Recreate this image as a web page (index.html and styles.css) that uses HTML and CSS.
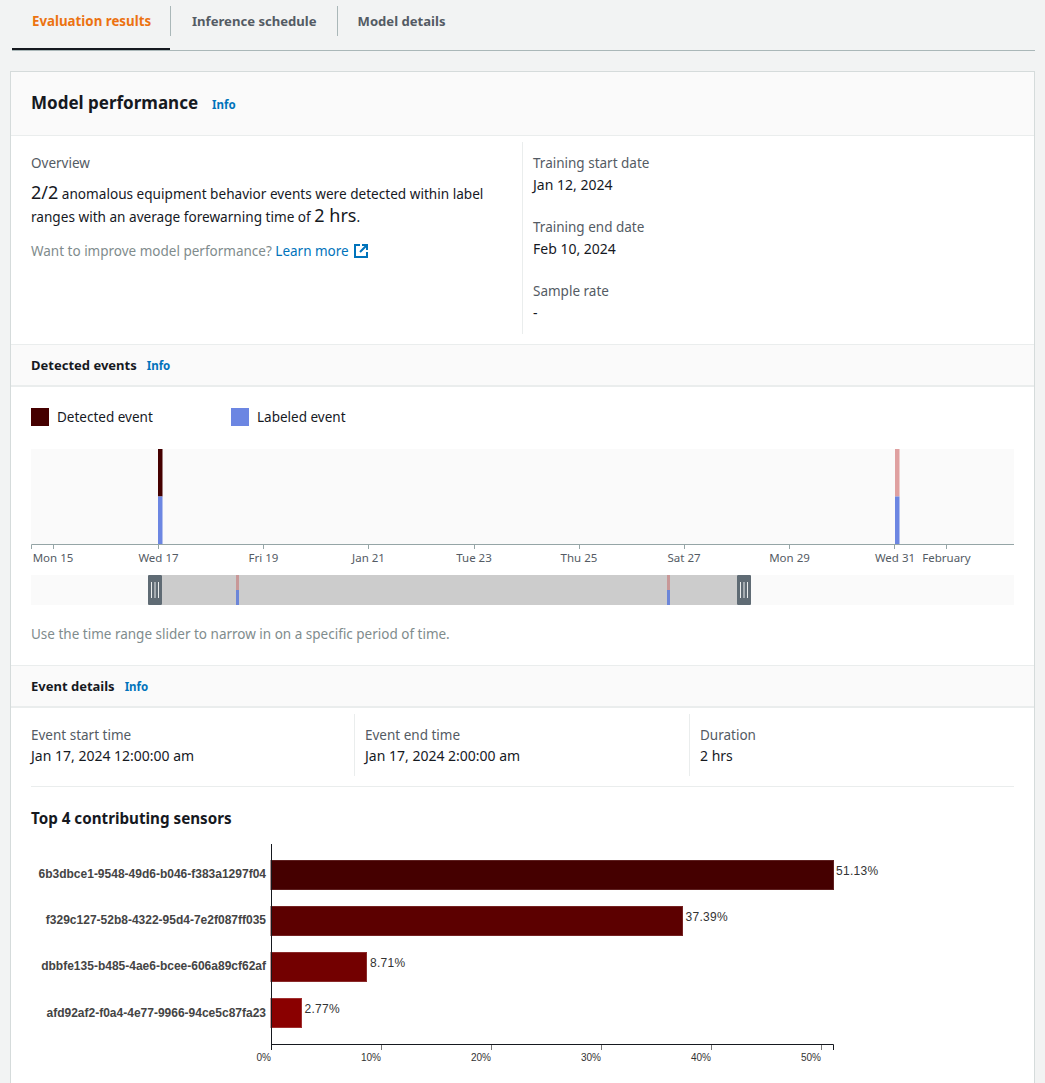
FILE: index.html
```html
<!DOCTYPE html>
<html lang="en">

<head>
  <meta charset="UTF-8" />
  <meta name="viewport" content="width=device-width, initial-scale=1.0" />
  <title>Evaluation results</title>
  <link rel="stylesheet" href="styles.css">
</head>

<body>
  <div class="tabs">
    <a class="tab active">Evaluation results</a>
    <a class="tab">Inference schedule</a>
    <a class="tab">Model details</a>
  </div>

  <div class="card">
    <div class="card-head">
      <h1>Model performance</h1>
      <a class="info">Info</a>
    </div>

    <div class="overview">
      <div class="overview-main">
        <div class="label">Overview</div>
        <p class="summary"><span class="big">2/2</span> anomalous equipment behavior events were detected within label<br>
          ranges with an average forewarning time of <span class="big">2 hrs</span>.</p>
        <p class="muted">Want to improve model performance? <a class="link">Learn more
          <svg class="ext-icon" viewBox="0 0 16 16" width="16" height="16">
            <path d="M7 2H2v12h12V9" />
            <path d="M9 2h5v5M14 2L7 9" />
          </svg></a></p>
      </div>
      <div class="overview-side">
        <div class="field">
          <div class="label">Training start date</div>
          <div>Jan 12, 2024</div>
        </div>
        <div class="field">
          <div class="label">Training end date</div>
          <div>Feb 10, 2024</div>
        </div>
        <div class="field">
          <div class="label">Sample rate</div>
          <div>-</div>
        </div>
      </div>
    </div>

    <div class="section-head">
      <h2>Detected events</h2>
      <a class="info">Info</a>
    </div>

    <div class="events">
      <div class="legend">
        <div class="legend-item"><span class="swatch detected"></span>Detected event</div>
        <div class="legend-item"><span class="swatch labeled"></span>Labeled event</div>
      </div>

      <svg class="timeline" viewBox="31 449 983 156" width="983" height="156">
        <rect x="31" y="449" width="983" height="95" fill="#fafafa" />
        <rect x="158" y="449" width="4.5" height="47.5" fill="#450000" />
        <rect x="158" y="496.5" width="4.5" height="47.5" fill="#6c86e2" />
        <rect x="895" y="449" width="4.5" height="47.5" fill="#dfa0a0" />
        <rect x="895" y="496.5" width="4.5" height="47.5" fill="#6c86e2" />

        <g class="axis-line">
          <path d="M31.5 549V544.5H1014" />
          <path d="M53.5 544v5M158.5 544v5M263.5 544v5M368.5 544v5M474.5 544v5M579.5 544v5M684.5 544v5M789.5 544v5M894.5 544v5M946.5 544v5" />
        </g>
        <g class="axis-text">
          <text x="53" y="562">Mon 15</text>
          <text x="158.5" y="562">Wed 17</text>
          <text x="263.5" y="562">Fri 19</text>
          <text x="368.5" y="562">Jan 21</text>
          <text x="474" y="562">Tue 23</text>
          <text x="579" y="562">Thu 25</text>
          <text x="684" y="562">Sat 27</text>
          <text x="789.5" y="562">Mon 29</text>
          <text x="895" y="562">Wed 31</text>
          <text x="946.5" y="562">February</text>
        </g>

        <rect x="31" y="575" width="983" height="30" fill="#fafafa" />
        <rect x="162" y="575" width="575" height="30" fill="#cccccc" />
        <rect x="236" y="575" width="3" height="15" fill="#c89898" />
        <rect x="236" y="590" width="3" height="15" fill="#6c86d8" />
        <rect x="667" y="575" width="3" height="15" fill="#c89898" />
        <rect x="667" y="590" width="3" height="15" fill="#6c86d8" />

        <rect x="148" y="575" width="14" height="30" rx="1" fill="#5f6b74" />
        <path class="grip" d="M151.5 582v16M155 582v16M158.500 582v16" />
        <rect x="737" y="575" width="14" height="30" rx="1" fill="#5f6b74" />
        <path class="grip" d="M740.500 582v16M744 582v16M747.500 582v16" />
      </svg>

      <p class="muted slider-note">Use the time range slider to narrow in on a specific period of time.</p>
    </div>

    <div class="section-head">
      <h2>Event details</h2>
      <a class="info">Info</a>
    </div>

    <div class="details">
      <div class="columns">
        <div class="col">
          <div class="label">Event start time</div>
          <div>Jan 17, 2024 12:00:00 am</div>
        </div>
        <div class="col">
          <div class="label">Event end time</div>
          <div>Jan 17, 2024 2:00:00 am</div>
        </div>
        <div class="col">
          <div class="label">Duration</div>
          <div>2 hrs</div>
        </div>
      </div>

      <h3>Top 4 contributing sensors</h3>

      <svg class="sensors" viewBox="31 838 983 245" width="983" height="245">
        <rect x="271" y="860.5" width="562.500" height="29" fill="#450000" stroke="#5e2020" />
        <rect x="271" y="906.500" width="411.500" height="29" fill="#5c0000" stroke="#742222" />
        <rect x="271" y="952.500" width="95.500" height="29" fill="#730000" stroke="#8a2a2a" />
        <rect x="271" y="998.500" width="30.500" height="29" fill="#8a0000" stroke="#a03030" />

        <g class="sensor-name">
          <text x="266" y="878">6b3dbce1-9548-49d6-b046-f383a1297f04</text>
          <text x="266" y="924">f329c127-52b8-4322-95d4-7e2f087ff035</text>
          <text x="266" y="970">dbbfe135-b485-4ae6-bcee-606a89cf62af</text>
          <text x="266" y="1017">afd92af2-f0a4-4e77-9966-94ce5c87fa23</text>
        </g>
        <g class="bar-value">
          <text x="836" y="875">51.13%</text>
          <text x="685.500" y="921">37.39%</text>
          <text x="370" y="967">8.71%</text>
          <text x="304.500" y="1013">2.77%</text>
        </g>

        <path class="bar-axis" d="M271.500 844V1050M271.500 1044.500H833.500V1050" />
        <path class="bar-tick" d="M381.500 1045v5M491.500 1045v5M601.500 1045v5M711.500 1045v5M821.500 1045v5" />
        <g class="bar-axis-text">
          <text x="271" y="1061">0%</text>
          <text x="381" y="1061">10%</text>
          <text x="491" y="1061">20%</text>
          <text x="601" y="1061">30%</text>
          <text x="711" y="1061">40%</text>
          <text x="821" y="1061">50%</text>
        </g>
      </svg>
    </div>
  </div>
</body>

</html>
```

FILE: styles.css
```css
html {
  overflow: hidden;
}

body {
  margin: 0;
  height: 1083px;
  overflow: hidden;
  background: #f2f3f3;
  color: #16191f;
  font-family: "Noto Sans", Arial, sans-serif;
  font-size: 14px;
  line-height: 22px;
}

/* tabs */
.tabs {
  display: flex;
  height: 50px;
  margin: 0 10px 0 12px;
  border-bottom: 1px solid #aab7b8;
  box-sizing: content-box;
}

.tab {
  height: 30px;
  margin-top: 6px;
  padding: 0 20px;
  border-left: 1px solid #aab7b8;
  color: #545b64;
  font-size: 13.100px;
  font-weight: 700;
  line-height: 30px;
}

.tab:nth-child(2) {
  padding-left: 21px;
}

.tab.active {
  width: 158px;
  height: 44px;
  margin-top: 6px;
  margin-bottom: -1px;
  padding: 0 0 0 20px;
  border-left: 0;
  border-bottom: 2px solid #16191f;
  box-sizing: border-box;
  color: #ec7211;
  font-size: 13.300px;
  line-height: 30px;
}

/* card */
.card {
  margin: 20px 10px 0 10px;
  border: 1px solid #d5dbdb;
  border-bottom: 0;
  background: #fff;
}

.card-head {
  display: flex;
  align-items: center;
  height: 63px;
  padding-left: 20px;
  border-bottom: 1px solid #eaeded;
  background: #fafafa;
}

h1 {
  margin: -1px 14px 0 0;
  font-size: 17px;
  font-weight: 700;
}

.info {
  color: #0073bb;
  font-size: 11.500px;
  font-weight: 700;
}

.card-head .info {
  margin-top: 3px;
}

.section-head {
  display: flex;
  align-items: center;
  height: 40px;
  padding-left: 20px;
  border-top: 1px solid #eaeded;
  border-bottom: 2px solid #eaeded;
  background: #fafafa;
  box-sizing: content-box;
}

h2 {
  margin: 0 10px 0 0;
  font-size: 13px;
  font-weight: 700;
}

.section-head .info {
  margin-top: 2px;
}

h3 {
  margin: 19px 0 8px 0;
  font-size: 15.200px;
  font-weight: 700;
  line-height: 24px;
}

.label {
  color: #545b64;
  font-size: 13.500px;
}

.muted {
  margin: 0;
  color: #7f8c8d;
  font-size: 13.500px;
}

.link {
  color: #0073bb;
}

.ext-icon {
  margin-left: 1px;
  fill: none;
  stroke: #0073bb;
  stroke-width: 2;
  vertical-align: -3px;
}

/* overview */
.overview {
  display: flex;
  height: 208px;
}

.overview-main {
  width: 511px;
  padding: 16px 20px 0 20px;
  box-sizing: border-box;
}

.summary {
  margin: 8px 0 12px 0;
  font-size: 13.600px;
  line-height: 23px;
}

.big {
  font-size: 18px;
  line-height: 1;
}

.overview-side {
  height: 192px;
  margin-top: 6px;
  padding-left: 10px;
  border-left: 1px solid #eaeded;
}

.field {
  margin-top: 10px;
  margin-bottom: 20px;
}

/* detected events */
.events {
  height: 278px;
  padding: 0 20px;
}

.legend {
  display: flex;
  padding-top: 19px;
  height: 43px;
  font-size: 13.500px;
}

.legend-item {
  display: flex;
  align-items: center;
  width: 200px;
  height: 22px;
}

.swatch {
  width: 18px;
  height: 18px;
  margin-right: 8px;
}

.swatch.detected {
  background: #450000;
}

.swatch.labeled {
  background: #6c86e2;
}

.timeline,
.sensors {
  display: block;
}

.axis-line path {
  fill: none;
  stroke: #95a5a6;
}

.axis-text text {
  fill: #545b64;
  font-family: "Noto Sans", Arial, sans-serif;
  font-size: 11.500px;
  text-anchor: middle;
}

.grip {
  fill: none;
  stroke: #eaeded;
  stroke-width: 1;
}

.slider-note {
  margin-top: 18px;
}

/* event details */
.details {
  padding: 6px 20px 0 20px;
}

.columns {
  display: flex;
  padding-bottom: 10px;
  border-bottom: 1px solid #eaeded;
}

.col {
  flex: none;
  width: 335px;
  height: 62px;
  padding: 10px 0 0 10px;
  border-left: 1px solid #eaeded;
  box-sizing: border-box;
}

.col:first-child {
  width: 323px;
  padding-left: 0;
  border-left: 0;
}

.col:last-child {
  width: 325px;
}

.col .label {
  margin-bottom: -1px;
}

/* sensors chart */
.sensor-name text {
  fill: #444;
  font-family: "Liberation Sans", Arial, sans-serif;
  font-size: 12px;
  font-weight: 700;
  text-anchor: end;
}

.bar-value text {
  fill: #333;
  font-family: "Liberation Sans", Arial, sans-serif;
  font-size: 12px;
  letter-spacing: 0.3px;
}

.bar-axis {
  fill: none;
  stroke: #16191f;
}

.bar-tick {
  fill: none;
  stroke: #777;
}

.bar-axis-text text {
  fill: #333;
  font-family: "Liberation Sans", Arial, sans-serif;
  font-size: 10px;
  text-anchor: end;
}
```
